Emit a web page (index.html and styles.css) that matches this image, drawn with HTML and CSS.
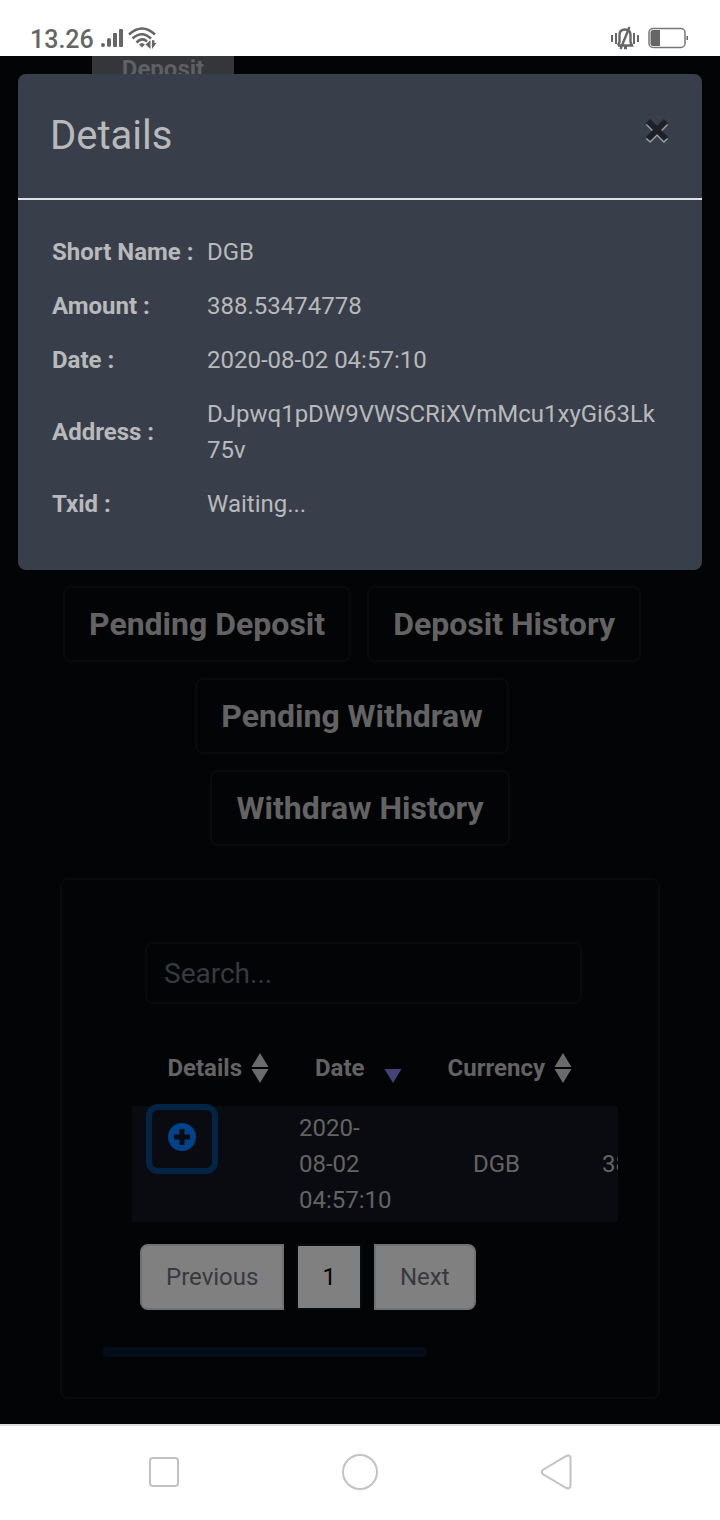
FILE: index.html
```
<!DOCTYPE html>
<html lang="en">
<head>
<meta charset="utf-8">
<meta name="viewport" content="width=device-width">
<title>Details</title>
<link rel="stylesheet" href="styles.css">
</head>
<body>
<header class="status">
  <span class="time">13.26</span>
  <svg class="signal" width="24" height="20" viewBox="0 0 24 20" fill="#666"><rect x="1" y="15" width="4" height="4" rx="2"/><rect x="7" y="10" width="4" height="9" rx="2"/><rect x="13" y="5" width="4" height="14" rx="1"/><rect x="19" y="1" width="4" height="18" rx="1"/></svg>
  <svg class="wifi" width="30" height="24" viewBox="0 0 30 24" fill="none" stroke="#666" stroke-width="2.600"><path d="M1 8.500Q14 -3.500 27 8.500M4.500 12.500Q14 4 23 12.500M8.500 16.500Q14 11 19 15.500"/><path d="M11 18.500Q14 15.500 17 18.500L14 21.500Z" fill="#666" stroke="none"/><path d="M22.500 14V23L17.500 18.500ZM24 14V23L28.500 17H26.500V14.500Z" fill="#666" stroke="none"/></svg>
  <span class="status-right">
    <svg width="30" height="24" viewBox="0 0 30 24" fill="none" stroke="#666" stroke-width="2"><path d="M2 9V16M6 7V18M24 7V18M28 9V16"/><path d="M8 19.500H22L20.500 16V9Q20.500 3.500 15 3.500T9.500 9V16L8 19.500M19.500 1L10.500 23M14 22H17" stroke-width="2.400"/></svg>
    <svg width="42" height="22" viewBox="0 0 42 22"><rect x="1" y="1.500" width="36" height="19" rx="4" fill="none" stroke="#777" stroke-width="1.500"/><path d="M5 3H12V19H5Q2.500 19 2.500 16.500V5.500Q2.500 3 5 3Z" fill="#666"/><rect x="38.500" y="9" width="1.500" height="4" fill="#666"/></svg>
  </span>
</header>
<main class="page">
  <button class="deposit" type="button">Deposit</button>
  <nav class="tabs" aria-label="Wallet history">
    <button type="button">Pending Deposit</button><button type="button">Deposit History</button><button type="button">Pending Withdraw</button><button type="button">Withdraw History</button>
  </nav>
  <section class="card">
    <div class="card-body">
      <input class="search" type="search" aria-label="Search" placeholder="Search...">
      <div class="table-wrap">
        <table class="history">
          <colgroup><col class="c-details"><col class="c-date"><col class="c-currency"><col class="c-amount"></colgroup>
          <thead><tr>
            <th><button class="sort" type="button">Details<svg width="20" height="32" viewBox="0 0 20 32" fill="#6b6b6b"><path d="M10 1L18.500 15H1.500ZM1.500 17H18.500L10 31Z"/></svg></button></th>
            <th><button class="sort sort-active" type="button">Date<svg width="20" height="32" viewBox="0 0 20 32" fill="#434378"><path d="M1.500 17H18.500L10 31Z"/></svg></button></th>
            <th><button class="sort" type="button">Currency<svg width="20" height="32" viewBox="0 0 20 32" fill="#6b6b6b"><path d="M10 1L18.500 15H1.500ZM1.500 17H18.500L10 31Z"/></svg></button></th>
            <th></th>
          </tr></thead>
          <tbody><tr>
            <td class="top"><button class="plus" type="button" aria-label="Show details"><svg width="28" height="28" viewBox="0 0 28 28"><circle cx="14" cy="14" r="14" fill="#00438a"/><path d="M14 6V22M6 14H22" stroke="#0a0b10" stroke-width="5"/></svg></button></td>
            <td>2020-08-02 04:57:10</td>
            <td class="center">DGB</td>
            <td>388.53474778</td>
          </tr></tbody>
        </table>
      </div>
      <nav class="pager" aria-label="Pages">
        <button class="prev" type="button">Previous</button>
        <button class="current" type="button">1</button>
        <button class="next" type="button">Next</button>
      </nav>
    </div>
    <div class="scrollbar"></div>
  </section>
  <div class="modal" role="dialog" aria-labelledby="modal-title">
    <header class="modal-head">
      <h1 id="modal-title">Details</h1>
      <button class="close" type="button" aria-label="Close"><svg width="26" height="26" viewBox="0 0 26 26" fill="none" stroke-width="6"><path d="M4 5L22 23M22 5L4 23" stroke="#9c9fa4"/><path d="M4 3L22 21M22 3L4 21" stroke="#1d2025"/></svg></button>
    </header>
    <div class="modal-body">
      <table class="details">
        <tr><th scope="row">Short Name :</th><td>DGB</td></tr>
        <tr><th scope="row">Amount :</th><td>388.53474778</td></tr>
        <tr><th scope="row">Date :</th><td>2020-08-02 04:57:10</td></tr>
        <tr><th scope="row">Address :</th><td>DJpwq1pDW9VWSCRiXVmMcu1xyGi63Lk75v</td></tr>
        <tr><th scope="row">Txid :</th><td>Waiting...</td></tr>
      </table>
    </div>
  </div>
</main>
<footer class="navbar">
  <button type="button" aria-label="Recent apps"><svg width="40" height="40" viewBox="0 0 40 40"><rect x="6" y="6" width="28" height="28" rx="3"/></svg></button>
  <button type="button" aria-label="Home"><svg width="40" height="40" viewBox="0 0 40 40"><circle cx="20" cy="20" r="17"/></svg></button>
  <button type="button" aria-label="Back"><svg width="40" height="40" viewBox="0 0 40 40"><path d="M7.500 17.500L29.500 4.500Q34.500 2 34.500 6.500V33Q34.500 38 29.500 35.500L7.500 22.500Q4 20 7.500 17.500Z"/></svg></button>
</footer>
</body>
</html>
```

FILE: styles.css
```
* { box-sizing: border-box; }
body {
  margin: 0;
  min-height: 100vh;
  display: flex;
  flex-direction: column;
  background: #fff;
  font: 24px/36px Roboto, "Liberation Sans", sans-serif;
}
button { font: inherit; border: 0; padding: 0; background: none; color: inherit; }
svg { display: block; flex: none; }
table { border-collapse: collapse; }

.status {
  height: 56px;
  padding: 20px 30px 0;
  display: flex;
  align-items: center;
  color: #666;
}
.time { padding-top: 3px; font-size: 25px; font-weight: 500; }
.signal { margin-left: 6px; }
.wifi { margin-left: 4px; }
.status-right { margin-left: auto; display: flex; align-items: center; gap: 8px; }

.page {
  position: relative;
  flex: 1;
  padding: 0 60px 24px;
  background: #030406;
  color: #636363;
  overflow: hidden;
}
.deposit {
  display: block;
  width: 142px;
  height: 60px;
  margin: 0 0 470px 32px;
  padding-bottom: 34px;
  background: #343639;
  color: #5e6063;
  font-weight: 700;
  line-height: 26px;
}
.tabs {
  display: flex;
  flex-wrap: wrap;
  justify-content: center;
  row-gap: 16px;
}
.tabs button {
  margin-right: 16px;
  padding: 12px 24px;
  border: 2px solid #090a0c;
  border-radius: 8px;
  font-size: 32px;
  font-weight: 700;
  line-height: 48px;
}
.tabs button:last-child { margin-right: 0; }

.card {
  margin-top: 32px;
  padding: 62px 40px 40px;
  border: 2px solid #090a0c;
  border-radius: 8px;
}
.card-body { padding-left: 30px; }
.search {
  display: block;
  width: calc(100% - 49px);
  height: 62px;
  margin-left: 13px;
  padding: 0 17px;
  border: 2px solid #090a0c;
  border-radius: 8px;
  background: none;
  font: inherit;
  font-size: 28px;
  color: #636363;
}
.search::placeholder { color: #363a40; opacity: 1; }

.table-wrap { margin-top: 26px; overflow: hidden; }
.history { width: 640px; table-layout: fixed; }
.c-details { width: 151px; }
.c-date { width: 124px; }
.c-currency { width: 179px; }
.history th { padding: 20px 0; line-height: 36px; }
.history td { padding: 4px 16px; }
.history td.center { text-align: center; }
.history td.top { padding-left: 20px; vertical-align: top; }
.history tbody tr { background: #0a0b10; }
.sort {
  width: 100%;
  padding-right: 13px;
  display: flex;
  align-items: center;
  justify-content: flex-end;
  gap: 8px;
  font-weight: 700;
}
.sort-active { padding: 0 4px 0 32px; justify-content: space-between; }
.plus {
  width: 60px;
  height: 58px;
  padding-bottom: 4px;
  display: grid;
  place-items: center;
  border-radius: 6px;
  box-shadow: 0 0 0 6px #042445;
}

.pager { margin: 22px 0 37px 8px; display: flex; gap: 12px; }
.pager button {
  height: 66px;
  padding: 0 24px;
  border: 2px solid #6f7173;
  background: #808080;
  color: #363a3e;
}
.pager .prev { border-radius: 8px 0 0 8px; }
.pager .next { border-radius: 0 8px 8px 0; }
.pager .current { border-color: #090a0c; color: #000; }
.scrollbar { width: 63%; height: 10px; border-radius: 5px; background: #050e18; }

.modal {
  position: absolute;
  inset: 18px 18px auto;
  border-radius: 8px;
  background: #393f4a;
  color: #b8b9bb;
}
.modal-head {
  padding: 32px 32px 32px;
  display: flex;
  justify-content: space-between;
  align-items: flex-start;
  border-bottom: 2px solid #dee2e6;
}
.modal-head h1 { margin: 0; font-size: 40px; font-weight: 400; line-height: 60px; }
.close { margin-top: 12px; }
.modal-body { padding: 25px 32px 39px; }
.details { width: 100%; table-layout: fixed; }
.details th { width: 155px; padding: 9px 2px; text-align: left; white-space: nowrap; }
.details td { padding: 9px 8px 9px 2px; word-break: break-all; }

.navbar {
  height: 96px;
  padding: 0 66px 2px;
  display: grid;
  grid-template-columns: repeat(3, 1fr);
  border-top: 2px solid #dddee0;
}
.navbar button { display: grid; place-items: center; }
.navbar svg { fill: none; stroke: #c2c2c2; stroke-width: 2; }
```
